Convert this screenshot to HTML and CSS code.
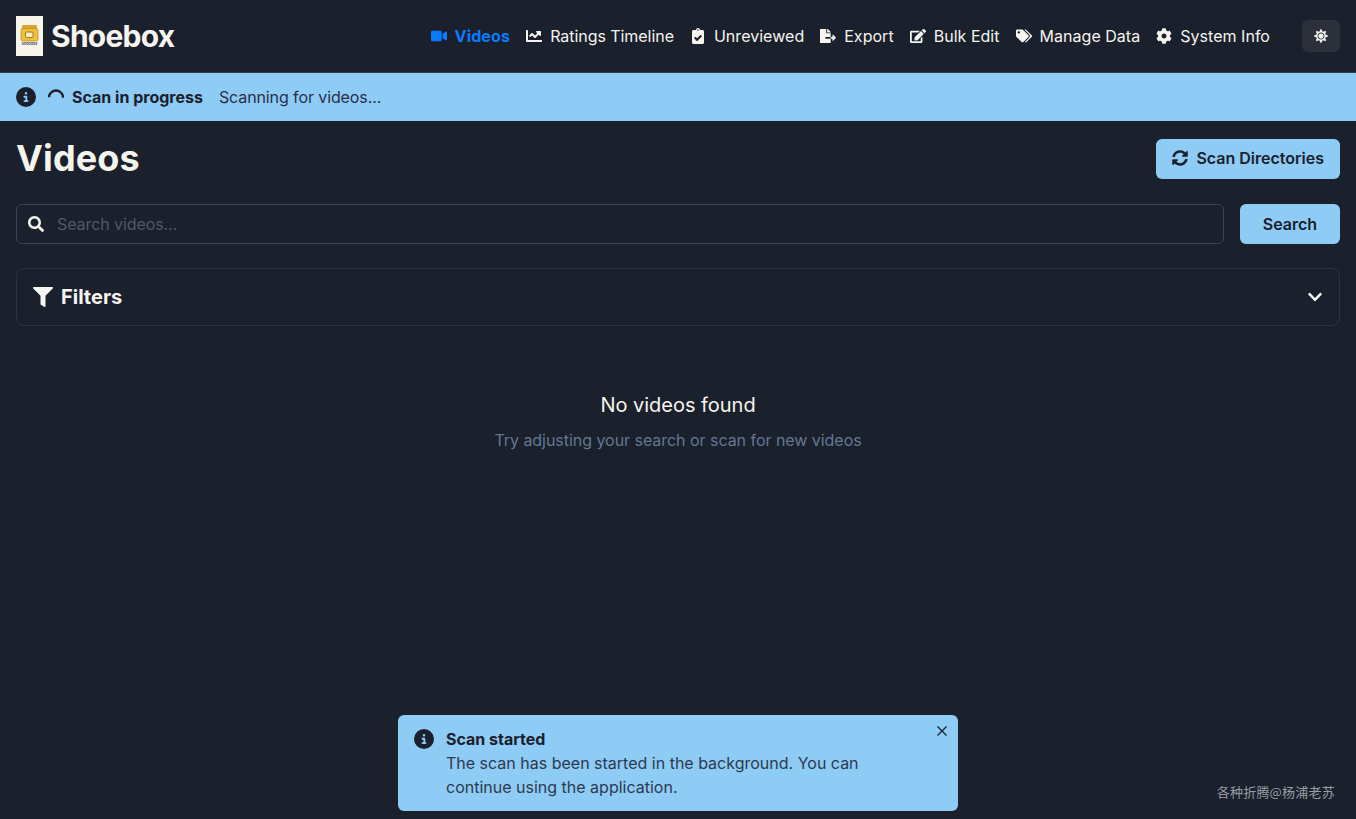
FILE: index.html
```html
<!DOCTYPE html>
<html lang="en">
<head>
<meta charset="utf-8">
<title>Shoebox</title>
<link rel="stylesheet" href="styles.css">
</head>
<body>
<header class="navbar">
  <a class="brand" href="#">
    <span class="logo">
      <svg class="logo-art" viewBox="0 0 27 40"><rect x="6" y="9" width="15" height="5" rx="1.200" fill="#d9a52c"/><rect x="5" y="12.500" width="17" height="12.500" rx="1.800" fill="#f0bf3a" stroke="#b98a24" stroke-width=".7"/><rect x="9.500" y="16" width="7.500" height="5.500" rx="1" fill="#fbeeb8" stroke="#8f6c1e" stroke-width=".9"/><text class="logo-text" x="13.500" y="29.300" text-anchor="middle">Shoebox</text></svg>
    </span>
    <span class="brand-name">Shoebox</span>
  </a>
  <nav class="nav">
    <a class="nav-item active" href="#"><svg class="ico" viewBox="0 0 576 512"><path d="M336.2 64H47.8C21.4 64 0 85.4 0 111.8v288.4C0 426.600 21.400 448 47.800 448h288.400c26.400 0 47.800-21.400 47.800-47.800V111.800c0-26.400-21.400-47.800-47.800-47.800zm189.400 37.700L416 177.300v157.400l109.600 75.500c21.200 14.600 50.400-.3 50.400-25.800V127.500c0-25.400-29.100-40.400-50.400-25.800z"/></svg>Videos</a>
    <a class="nav-item tight" href="#"><svg class="ico" viewBox="0 0 512 512"><path d="M496 384H64V80c0-8.840-7.160-16-16-16H16C7.160 64 0 71.160 0 80v336c0 17.670 14.330 32 32 32h464c8.840 0 16-7.160 16-16v-32c0-8.840-7.160-16-16-16zM464 96H345.940c-21.380 0-32.090 25.850-16.970 40.970l32.400 32.400L288 242.750l-73.370-73.370c-12.500-12.500-32.760-12.500-45.250 0l-68.690 68.690c-6.250 6.250-6.250 16.380 0 22.630l22.620 22.620c6.250 6.250 16.380 6.250 22.630 0L192 237.250l73.370 73.370c12.500 12.500 32.760 12.500 45.250 0l96-96 32.400 32.400c15.120 15.120 40.970 4.410 40.970-16.970V112c.01-8.840-7.150-16-15.990-16z"/></svg>Ratings Timeline</a>
    <a class="nav-item" href="#"><svg class="ico" viewBox="0 0 384 512"><path d="M336 64h-80c0-35.300-28.700-64-64-64s-64 28.700-64 64H48C21.500 64 0 85.500 0 112v352c0 26.500 21.500 48 48 48h288c26.500 0 48-21.500 48-48V112c0-26.500-21.500-48-48-48zM192 40c13.300 0 24 10.700 24 24s-10.700 24-24 24-24-10.700-24-24 10.700-24 24-24zm121.200 231.800l-143 141.800c-4.700 4.700-12.300 4.600-17-.1l-82.600-83.300c-4.700-4.700-4.600-12.300.1-17L99.100 285c4.700-4.700 12.300-4.600 17 .1l46 46.400 106-105.200c4.700-4.700 12.300-4.600 17 .1l28.200 28.400c4.700 4.800 4.600 12.300-.1 17z"/></svg>Unreviewed</a>
    <a class="nav-item" href="#"><svg class="ico" viewBox="0 0 576 512"><path d="M384 121.900c0-6.300-2.500-12.400-7-16.900L279.100 7c-4.500-4.500-10.600-7-17-7H256v128h128zM571 308l-95.700-96.400c-10.100-10.100-27.400-3-27.400 11.300V288h-64v64h64v65.200c0 14.300 17.300 21.400 27.400 11.300L571 332c6.600-6.600 6.600-17.400 0-24zm-379 28v-32c0-8.800 7.200-16 16-16h176V160H248c-13.200 0-24-10.800-24-24V0H24C10.700 0 0 10.700 0 24v464c0 13.300 10.700 24 24 24h336c13.300 0 24-10.700 24-24V352H208c-8.800 0-16-7.200-16-16z"/></svg>Export</a>
    <a class="nav-item" href="#"><svg class="ico" viewBox="0 0 576 512"><path d="M402.600 83.200l90.200 90.200c3.800 3.800 3.800 10 0 13.800L274.400 405.600l-92.800 10.300c-12.400 1.400-22.900-9.100-21.500-21.500l10.300-92.800L388.800 83.200c3.800-3.800 10-3.800 13.800 0zm162-22.900l-48.800-48.800c-15.200-15.200-39.900-15.200-55.200 0l-35.400 35.400c-3.800 3.800-3.800 10 0 13.800l90.200 90.200c3.800 3.800 10 3.800 13.800 0l35.400-35.400c15.200-15.300 15.200-40 0-55.200zM384 346.200V448H64V128h229.800c3.200 0 6.200-1.300 8.500-3.500l40-40c7.600-7.600 2.200-20.500-8.500-20.500H48C21.500 64 0 85.500 0 112v352c0 26.500 21.500 48 48 48h352c26.500 0 48-21.500 48-48V306.200c0-10.700-12.900-16-20.500-8.500l-40 40c-2.200 2.300-3.500 5.300-3.500 8.500z"/></svg>Bulk Edit</a>
    <a class="nav-item" href="#"><svg class="ico" viewBox="0 0 640 512"><path d="M497.941 225.941L286.059 14.059A48 48 0 0 0 252.118 0H48C21.490 0 0 21.490 0 48v204.118a48 48 0 0 0 14.059 33.941l211.882 211.882c18.744 18.745 49.136 18.746 67.882 0l204.118-204.118c18.745-18.745 18.745-49.137 0-67.882zM112 160c-26.510 0-48-21.490-48-48s21.490-48 48-48 48 21.490 48 48-21.490 48-48 48zm513.941 133.823L421.823 497.941c-18.745 18.745-49.137 18.745-67.882 0l-.36-.36L527.640 323.522c16.999-16.999 26.360-39.600 26.360-63.640s-9.362-46.641-26.360-63.640L331.397 0h48.721a48 48 0 0 1 33.941 14.059l211.882 211.882c18.745 18.745 18.745 49.137 0 67.882z"/></svg>Manage Data</a>
    <a class="nav-item" href="#"><svg class="ico" viewBox="0 0 512 512"><path d="M487.400 315.700l-42.600-24.600c4.300-23.200 4.300-47 0-70.200l42.600-24.600c4.900-2.800 7.100-8.600 5.500-14-11.100-35.600-30-67.800-54.700-94.600-3.800-4.100-10-5.100-14.800-2.300L380.800 110c-17.900-15.400-38.500-27.300-60.800-35.100V25.800c0-5.600-3.900-10.500-9.400-11.700-36.700-8.200-74.300-7.800-109.200 0-5.500 1.200-9.400 6.100-9.400 11.700V75c-22.200 7.900-42.800 19.800-60.800 35.100L88.700 85.500c-4.900-2.800-11-1.900-14.800 2.300-24.700 26.700-43.600 58.900-54.700 94.600-1.700 5.400.6 11.200 5.500 14L67.300 221c-4.300 23.200-4.300 47 0 70.200l-42.600 24.600c-4.900 2.800-7.100 8.600-5.500 14 11.100 35.600 30 67.800 54.700 94.600 3.800 4.100 10 5.100 14.800 2.300l42.600-24.600c17.900 15.400 38.500 27.300 60.800 35.100v49.200c0 5.600 3.900 10.500 9.400 11.700 36.700 8.200 74.300 7.800 109.200 0 5.500-1.200 9.400-6.100 9.400-11.700v-49.200c22.200-7.900 42.800-19.800 60.800-35.100l42.600 24.600c4.900 2.800 11 1.900 14.800-2.300 24.700-26.700 43.600-58.900 54.700-94.600 1.500-5.500-.7-11.300-5.600-14.100zM256 336c-44.100 0-80-35.900-80-80s35.900-80 80-80 80 35.900 80 80-35.900 80-80 80z"/></svg>System Info</a>
    <button class="theme-btn" type="button" aria-label="Toggle theme"><svg class="sun" viewBox="0 0 512 512"><path d="M256 160c-52.900 0-96 43.100-96 96s43.100 96 96 96 96-43.100 96-96-43.100-96-96-96zm246.400 80.500l-94.700-47.300 33.500-100.400c4.500-13.600-8.400-26.500-21.900-21.900l-100.400 33.500-47.400-94.800c-6.400-12.800-24.600-12.800-31 0l-47.300 94.700L92.700 70.800c-13.600-4.500-26.500 8.400-21.900 21.900l33.500 100.400-94.700 47.400c-12.800 6.400-12.800 24.600 0 31l94.700 47.300-33.500 100.500c-4.500 13.600 8.400 26.500 21.900 21.900l100.400-33.500 47.300 94.700c6.400 12.800 24.600 12.800 31 0l47.300-94.700 100.400 33.500c13.600 4.500 26.500-8.400 21.900-21.900l-33.500-100.400 94.700-47.300c13-6.500 13-24.700.2-31.100zm-155.900 106c-49.900 49.900-131.100 49.900-181 0-49.900-49.900-49.900-131.100 0-181 49.900-49.900 131.100-49.900 181 0 49.900 49.900 49.900 131.100 0 181z"/></svg></button>
  </nav>
</header>

<div class="scan-bar">
  <svg class="info-ico" viewBox="0 0 512 512"><path d="M256 512A256 256 0 1 0 256 0a256 256 0 1 0 0 512zM216 336h24V272H216c-13.300 0-24-10.700-24-24s10.700-24 24-24h48c13.300 0 24 10.700 24 24v88h8c13.300 0 24 10.700 24 24s-10.700 24-24 24H216c-13.300 0-24-10.700-24-24s10.700-24 24-24zm40-208a32 32 0 1 1 0 64 32 32 0 1 1 0-64z"/></svg>
  <svg class="spinner" viewBox="0 0 16 16"><path d="M1 8.200A7 7 0 0 1 15 8.800" fill="none" stroke="currentColor" stroke-width="2.300"/></svg>
  <strong class="scan-title">Scan in progress</strong>
  <span class="scan-text">Scanning for videos...</span>
</div>

<main class="page">
  <div class="page-head">
    <h1 class="page-title">Videos</h1>
    <button class="btn btn-scan" type="button"><svg class="btn-ico" viewBox="0 0 512 512"><path d="M370.720 133.280C339.458 104.008 298.888 87.962 255.848 88c-77.458.068-144.328 53.178-162.791 126.850-1.344 5.363-6.122 9.150-11.651 9.150H24.103c-7.498 0-13.194-6.807-11.807-14.176C33.933 94.924 134.813 8 256 8c66.448 0 126.791 26.136 171.315 68.685L463.030 40.970C478.149 25.851 504 36.559 504 57.941V192c0 13.255-10.745 24-24 24H345.941c-21.382 0-32.090-25.851-16.971-40.971l41.750-41.749zM32 296h134.059c21.382 0 32.090 25.851 16.971 40.971l-41.750 41.750c31.262 29.273 71.835 45.319 114.876 45.280 77.418-.07 144.315-53.144 162.787-126.849 1.344-5.363 6.122-9.150 11.651-9.150h57.304c7.498 0 13.194 6.807 11.807 14.176C478.067 417.076 377.187 504 256 504c-66.448 0-126.791-26.136-171.315-68.685L48.970 471.030C33.851 486.149 8 475.441 8 454.059V320c0-13.255 10.745-24 24-24z"/></svg>Scan Directories</button>
  </div>

  <form class="search-row">
    <label class="search-box">
      <svg class="search-ico" viewBox="0 0 512 512"><path d="M505 442.700L405.300 343c-4.500-4.500-10.600-7-17-7H372c27.600-35.300 44-79.700 44-128C416 93.100 322.900 0 208 0S0 93.100 0 208s93.100 208 208 208c48.300 0 92.700-16.400 128-44v16.300c0 6.400 2.500 12.500 7 17l99.700 99.700c9.400 9.400 24.600 9.400 33.900 0l28.300-28.300c9.400-9.400 9.400-24.600.1-34zM208 336c-70.700 0-128-57.200-128-128 0-70.700 57.200-128 128-128 70.700 0 128 57.200 128 128 0 70.700-57.200 128-128 128z"/></svg>
      <input class="search-input" type="text" placeholder="Search videos...">
    </label>
    <button class="btn btn-search" type="button">Search</button>
  </form>

  <section class="filters">
    <div class="filters-label"><svg class="filter-ico" viewBox="0 0 512 512"><path d="M487.976 0H24.028C2.710 0-8.047 25.866 7.058 40.971L192 225.941V432c0 7.831 3.821 15.170 10.237 19.662l80 55.980C298.020 518.690 320 507.493 320 487.980V225.941l184.947-184.970C520.021 25.896 509.338 0 487.976 0z"/></svg>Filters</div>
    <svg class="chevron" viewBox="0 0 448 512"><path d="M207.029 381.476L12.686 187.132c-9.373-9.373-9.373-24.569 0-33.941l22.667-22.667c9.357-9.357 24.522-9.375 33.901-.04L224 284.505l154.745-154.021c9.379-9.335 24.544-9.317 33.901.04l22.667 22.667c9.373 9.373 9.373 24.569 0 33.941L240.971 381.476c-9.373 9.372-24.569 9.372-33.942 0z"/></svg>
  </section>

  <div class="empty">
    <p class="empty-title">No videos found</p>
    <p class="empty-text">Try adjusting your search or scan for new videos</p>
  </div>
</main>

<aside class="toast">
  <svg class="toast-ico" viewBox="0 0 512 512"><path d="M256 512A256 256 0 1 0 256 0a256 256 0 1 0 0 512zM216 336h24V272H216c-13.300 0-24-10.700-24-24s10.700-24 24-24h48c13.300 0 24 10.700 24 24v88h8c13.300 0 24 10.700 24 24s-10.700 24-24 24H216c-13.300 0-24-10.700-24-24s10.700-24 24-24zm40-208a32 32 0 1 1 0 64 32 32 0 1 1 0-64z"/></svg>
  <div class="toast-body">
    <strong class="toast-title">Scan started</strong>
    <p class="toast-text">The scan has been started in the background. You can continue using the application.</p>
  </div>
  <svg class="toast-close" viewBox="0 0 12 12"><path d="M1.500 1.500l9 9M10.500 1.500l-9 9" fill="none" stroke="currentColor" stroke-width="1.300"/></svg>
</aside>

<div class="watermark">各种折腾@杨浦老苏</div>
</body>
</html>
```

FILE: styles.css
```css
* { box-sizing: border-box; }
html, body { margin: 0; height: 100%; }
body {
  background: #1a202c;
  color: #f5f4ef;
  font-family: Inter, "Noto Sans CJK SC", sans-serif;
  font-size: 16px;
  line-height: 24px;
  overflow: hidden;
}
a { color: inherit; text-decoration: none; }
p, h1 { margin: 0; }
button { font: inherit; border: 0; cursor: pointer; }

.navbar {
  display: flex;
  align-items: center;
  justify-content: space-between;
  height: 73px;
  padding: 0 16px;
  border-bottom: 1px solid #2f3a4c;
}
.brand { display: flex; align-items: center; gap: 8px; }
.logo { display: block; width: 27px; height: 40px; background: #f7f4ec; }
.logo-art { display: block; width: 27px; height: 40px; }
.logo-text { font-size: 3.700px; font-weight: 700; fill: #55524c; }
.brand-name { font-size: 30px; line-height: 40px; font-weight: 700; letter-spacing: -.75px; }

.nav { display: flex; align-items: center; gap: 16px; }
.nav-item { display: flex; align-items: center; gap: 8px; font-weight: 400; letter-spacing: .03px; }
.nav-item.tight { letter-spacing: -.05px; }
.nav-item.active { color: #0a7bff; font-weight: 700; letter-spacing: .15px; }
.ico { display: block; width: 16px; height: 16px; fill: currentColor; }
.theme-btn {
  display: flex;
  align-items: center;
  justify-content: center;
  width: 38px;
  height: 32px;
  margin-left: 16px;
  padding: 0;
  border-radius: 6px;
  background: #2b303b;
  color: #f5f4ef;
}
.sun { display: block; width: 14px; height: 14px; fill: currentColor; }

.scan-bar {
  display: flex;
  align-items: center;
  height: 48px;
  padding: 0 16px;
  background: #8ecbf5;
  color: #1a202c;
}
.info-ico { display: block; width: 20px; height: 20px; fill: #1a202c; margin-right: 12px; }
.spinner {
  display: block;
  width: 16px;
  height: 16px;
  margin-right: 8px;
  color: #1a202c;
}
.scan-title { font-weight: 700; margin-right: 16px; }
.scan-text { color: #26304a; letter-spacing: -.1px; }

.page { padding: 16px; }
.page-head {
  display: flex;
  align-items: flex-end;
  justify-content: space-between;
  height: 42px;
  margin-bottom: 25px;
}
.page-title { font-size: 36px; line-height: 42px; font-weight: 700; letter-spacing: .15px; color: #f5f4ec; }
.btn {
  display: flex;
  align-items: center;
  justify-content: center;
  height: 40px;
  border-radius: 6px;
  background: #8ecbf5;
  color: #1a202c;
  font-weight: 600;
}
.btn-scan { padding: 0 16px 2px; gap: 8px; }
.btn-ico { display: block; width: 16px; height: 16px; fill: currentColor; }
.btn-search { width: 100px; flex: none; }

.search-row { display: flex; gap: 16px; margin-bottom: 24px; }
.search-box {
  flex: 1;
  display: flex;
  align-items: center;
  height: 40px;
  padding: 0 11px;
  border: 1px solid #3e4350;
  border-radius: 6px;
}
.search-ico { display: block; width: 16px; height: 16px; fill: #f5f4ef; flex: none; margin-right: 13px; }
.search-input {
  flex: 1;
  border: 0;
  padding: 0;
  outline: 0;
  background: transparent;
  color: #f5f4ef;
  font: inherit;
  letter-spacing: -.08px;
}
.search-input::placeholder { color: #535866; opacity: 1; }

.filters {
  display: flex;
  align-items: center;
  justify-content: space-between;
  height: 58px;
  padding: 0 16px;
  border: 1px solid #2d3342;
  border-radius: 8px;
}
.filters-label { display: flex; align-items: center; gap: 8px; font-size: 20px; font-weight: 700; }
.filter-ico { display: block; width: 20px; height: 20px; fill: #f5f5f3; }
.chevron { display: block; width: 16px; height: 16px; fill: #f5f5f3; }

.empty { padding-top: 64px; text-align: center; }
.empty-title { font-size: 20px; line-height: 30px; color: #f5f4ec; letter-spacing: -.02px; }
.empty-text { margin-top: 8px; line-height: 24px; color: #667792; letter-spacing: -.04px; }

.toast {
  position: absolute;
  left: 398px;
  top: 715px;
  display: flex;
  width: 560px;
  height: 96px;
  padding: 12px 16px;
  border-radius: 6px;
  background: #8ecbf5;
  color: #1a202c;
}
.toast-ico { display: block; flex: none; width: 20px; height: 20px; margin-top: 2px; margin-right: 12px; fill: #1a202c; }
.toast-body { width: 450px; }
.toast-title { display: block; font-weight: 700; }
.toast-text { color: #2c3a50; }
.toast-close { position: absolute; top: 10px; right: 10px; width: 12px; height: 12px; color: #1a202c; }

.watermark {
  position: absolute;
  right: 21px;
  bottom: 16px;
  font-size: 13px;
  line-height: 22px;
  letter-spacing: .22px;
  color: #9a9da3;
  font-family: "Noto Sans CJK SC", sans-serif;
}
```
